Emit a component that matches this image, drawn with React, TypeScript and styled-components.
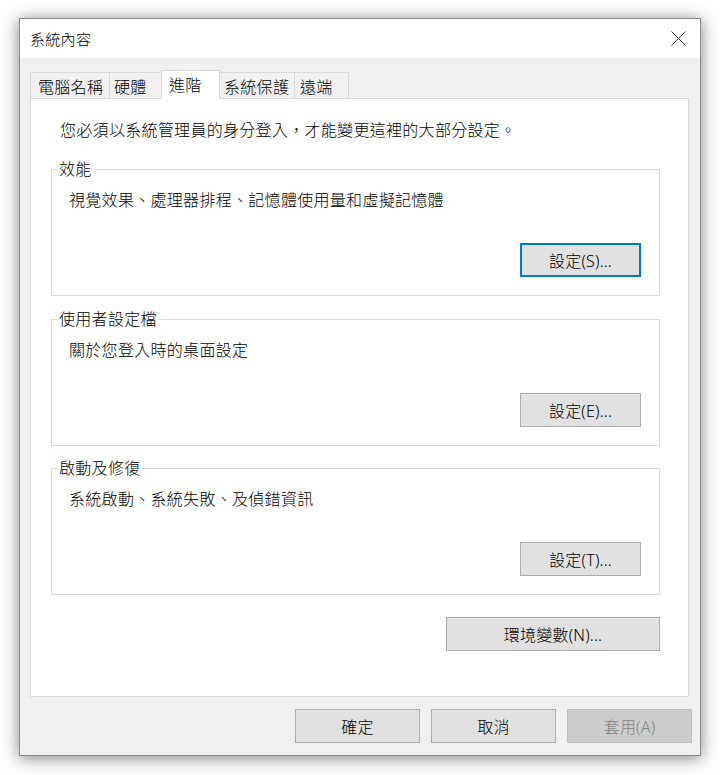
import React from "react";
import styled, { createGlobalStyle } from "styled-components";

const GlobalStyle = createGlobalStyle`
  html, body {
    margin: 0;
    padding: 0;
    background: #ffffff;
  }
  body {
    font-family: "Noto Sans", "Noto Sans CJK TC", sans-serif;
    font-weight: 400;
    color: #000;
  }
`;

const FONT = `"Noto Sans", "Noto Sans CJK TC", sans-serif`;

const Page = styled.div`
  padding: 18px 0 0 19px;
  width: 720px;
  height: 775px;
  box-sizing: border-box;
`;

const Window = styled.div`
  width: 682px;
  height: 738px;
  box-sizing: border-box;
  border: 1px solid #8a8a8a;
  background: #f0f0f0;
  box-shadow: 0 2px 16px rgba(0, 0, 0, 0.5);
  display: flex;
  flex-direction: column;
  font-family: ${FONT};
`;

const TitleBar = styled.div`
  height: 39px;
  flex: none;
  background: #ffffff;
  display: flex;
  align-items: center;
  justify-content: space-between;
  padding: 0 14px 0 10px;
`;

const Title = styled.span`
  font-size: 15px;
  letter-spacing: 0.3px;
  font-weight: 300;
  color: #000;
`;

const CloseIcon = styled.svg`
  width: 15px;
  height: 15px;
  display: block;
`;

const Body = styled.div`
  flex: 1;
  display: flex;
  flex-direction: column;
  padding: 12px 8px 12px 10px;
  min-height: 0;
`;

const TabStrip = styled.div`
  display: flex;
  align-items: flex-end;
  height: 29px;
  margin-bottom: -1px;
  position: relative;
  z-index: 1;
`;

const Tab = styled.div<{ $w: number; $pl: number; $active?: boolean }>`
  box-sizing: border-box;
  width: ${(p) => p.$w}px;
  height: ${(p) => (p.$active ? 29 : 27)}px;
  padding-left: ${(p) => p.$pl}px;
  margin-left: -1px;
  &:first-child {
    margin-left: 0;
  }
  border: 1px solid #d9d9d9;
  border-bottom: ${(p) => (p.$active ? "none" : "1px solid #d9d9d9")};
  background: ${(p) => (p.$active ? "#ffffff" : "#f0f0f0")};
  position: relative;
  z-index: ${(p) => (p.$active ? 2 : 1)};
  display: flex;
  align-items: center;
  padding-bottom: ${(p) => (p.$active ? 2 : 0)}px;
  font-size: 16px;
  letter-spacing: 0.3px;
  font-weight: 300;
  white-space: nowrap;
`;

const Panel = styled.div`
  flex: 1;
  margin-right: 3px;
  background: #ffffff;
  border: 1px solid #d9d9d9;
  display: flex;
  flex-direction: column;
  padding: 20px 28px 0 20px;
  min-height: 0;
`;

const Info = styled.div`
  padding-left: 9px;
  font-size: 16px;
  line-height: 22px;
  letter-spacing: 0.3px;
  font-weight: 300;
  margin-bottom: 18px;
`;

const Groups = styled.div`
  display: flex;
  flex-direction: column;
`;

const Group = styled.fieldset<{ $mt: number }>`
  margin: ${(p) => p.$mt}px 0 0 0;
  padding: 10px 0 18px 0;
  border: 1px solid #dcdcdc;
  min-inline-size: 0;
`;

const Legend = styled.legend`
  margin-left: 6px;
  padding: 0 1px;
  font-size: 16px;
  line-height: 20px;
  letter-spacing: 0.3px;
  font-weight: 300;
`;

const Desc = styled.div`
  padding-left: 17px;
  font-size: 16px;
  line-height: 22px;
  letter-spacing: 0.3px;
  font-weight: 300;
`;

const ButtonRow = styled.div<{ $mt: number; $pr: number; $gap?: number }>`
  display: flex;
  justify-content: flex-end;
  margin-top: ${(p) => p.$mt}px;
  padding-right: ${(p) => p.$pr}px;
  gap: ${(p) => p.$gap ?? 0}px;
`;

const Button = styled.button<{ $w: number; $focus?: boolean }>`
  box-sizing: border-box;
  width: ${(p) => p.$w}px;
  height: 34px;
  margin: 0;
  padding: 0;
  background: ${(p) => (p.disabled ? "#cccccc" : "#e1e1e1")};
  border: ${(p) =>
    p.$focus ? "2px solid #0078d7" : p.disabled ? "1px solid #bfbfbf" : "1px solid #adadad"};
  color: ${(p) => (p.disabled ? "#838383" : "#000")};
  font-family: ${FONT};
  font-size: 16px;
  font-weight: 300;
  letter-spacing: 0.2px;
  display: flex;
  align-items: center;
  justify-content: center;
`;

const tabs = [
  { label: "電腦名稱", w: 80, pl: 7 },
  { label: "硬體", w: 53, pl: 4 },
  { label: "進階", w: 59, pl: 7, active: true },
  { label: "系統保護", w: 76, pl: 4 },
  { label: "遠端", w: 55, pl: 5 },
];

const groups = [
  { legend: "效能", desc: "視覺效果、處理器排程、記憶體使用量和虛擬記憶體", btn: "設定(S)...", focus: true, mt: 0 },
  { legend: "使用者設定檔", desc: "關於您登入時的桌面設定", btn: "設定(E)...", mt: 13 },
  { legend: "啟動及修復", desc: "系統啟動、系統失敗、及偵錯資訊", btn: "設定(T)...", mt: 12 },
];

export default function App() {
  return (
    <>
      <GlobalStyle />
      <Page>
        <Window>
          <TitleBar>
            <Title>系統內容</Title>
            <CloseIcon viewBox="0 0 15 15">
              <path d="M0.5 0.5 L14.5 14.5 M14.5 0.5 L0.5 14.5" stroke="#333" strokeWidth="1" fill="none" />
            </CloseIcon>
          </TitleBar>
          <Body>
            <TabStrip>
              {tabs.map((t) => (
                <Tab key={t.label} $w={t.w} $pl={t.pl} $active={t.active}>
                  {t.label}
                </Tab>
              ))}
            </TabStrip>
            <Panel>
              <Info>您必須以系統管理員的身分登入，才能變更這裡的大部分設定。</Info>
              <Groups>
                {groups.map((g) => (
                  <Group key={g.legend} $mt={g.mt}>
                    <Legend>{g.legend}</Legend>
                    <Desc>{g.desc}</Desc>
                    <ButtonRow $mt={32} $pr={18}>
                      <Button $w={121} $focus={g.focus}>{g.btn}</Button>
                    </ButtonRow>
                  </Group>
                ))}
              </Groups>
              <ButtonRow $mt={22} $pr={0}>
                <Button $w={214}>環境變數(N)...</Button>
              </ButtonRow>
            </Panel>
            <ButtonRow $mt={12} $pr={0} $gap={11}>
              <Button $w={125}>確定</Button>
              <Button $w={125}>取消</Button>
              <Button $w={125} disabled>套用(A)</Button>
            </ButtonRow>
          </Body>
        </Window>
      </Page>
    </>
  );
}
